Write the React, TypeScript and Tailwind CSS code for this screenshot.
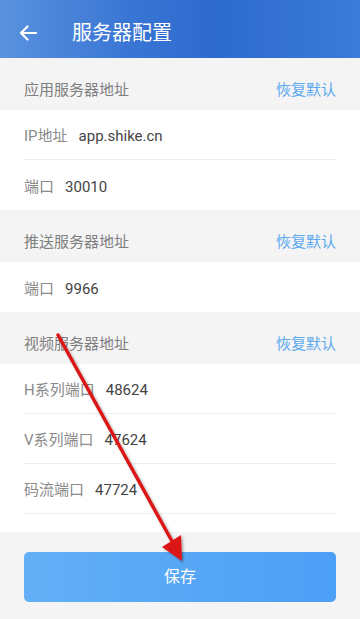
import React from "react";

interface Field {
  label: string;
  value: string;
}

interface Section {
  title: string;
  fields: Field[];
}

const sections: Section[] = [
  {
    title: "应用服务器地址",
    fields: [
      { label: "IP地址", value: "app.shike.cn" },
      { label: "端口", value: "30010" },
    ],
  },
  {
    title: "推送服务器地址",
    fields: [{ label: "端口", value: "9966" }],
  },
  {
    title: "视频服务器地址",
    fields: [
      { label: "H系列端口", value: "48624" },
      { label: "V系列端口", value: "47624" },
      { label: "码流端口", value: "47724" },
    ],
  },
];

function BackArrow() {
  return (
    <svg width="18" height="16" viewBox="0 0 18 16" fill="none">
      <path d="M17 8H2M8.5 1.5L2 8l6.5 6.5" stroke="white" strokeWidth="2.2" strokeLinecap="round" strokeLinejoin="round" />
    </svg>
  );
}

function RedArrow() {
  return (
    <svg className="pointer-events-none absolute left-0 top-0" width="360" height="619" viewBox="0 0 360 619">
      <defs>
        <filter id="sh" x="-20%" y="-20%" width="140%" height="140%">
          <feDropShadow dx="1.5" dy="1.5" stdDeviation="1.2" floodColor="#000" floodOpacity="0.35" />
        </filter>
      </defs>
      <g filter="url(#sh)">
        <line x1="58" y1="335" x2="173" y2="543" stroke="#dc1414" strokeWidth="3.4" strokeLinecap="round" />
        <polygon points="182,561 162,547 181,535" fill="#dc1414" />
      </g>
    </svg>
  );
}

export default function App() {
  return (
    <div
      className="relative h-[619px] w-[360px] overflow-hidden bg-[#f4f4f4]"
      style={{ fontFamily: "Roboto, 'Noto Sans CJK SC', sans-serif" }}
    >
      <div className="flex h-[58px] items-center bg-[linear-gradient(90deg,#5a92df_0%,#3a76d4_35%,#2d6acf_60%,#3c7bd7_100%)] px-[19px] pt-[7px] shadow-[0_1px_0_#8ab4ee]">
        <BackArrow />
        <h1 className="ml-[35px] text-[20px] text-white">服务器配置</h1>
      </div>

      {sections.map((s) => (
        <div key={s.title}>
          <div className="flex h-[52px] items-center justify-between bg-[#f4f4f4] px-[24px] pt-[13px]">
            <span className="text-[15px] text-[#7f7f7f]">{s.title}</span>
            <span className="text-[15px] text-[#5aa9ef]">恢复默认</span>
          </div>
          <div className="bg-white px-[24px]">
            {s.fields.map((f, i) => (
              <div
                key={f.label}
                className={
                  "flex h-[50px] items-center gap-[11px] pt-[4px] " +
                  (i < s.fields.length - 1 || s.title === "视频服务器地址" ? "border-b border-[#eeeeee]" : "")
                }
              >
                <span className="text-[15px] text-[#8a8a8a]">{f.label}</span>
                <span className="text-[15px] text-[#444]">{f.value}</span>
              </div>
            ))}
            {s.title === "视频服务器地址" && <div className="h-[18px]" />}
          </div>
        </div>
      ))}

      <div className="px-[24px] pt-[20px]">
        <button className="flex h-[50px] w-full items-center justify-center rounded-[5px] bg-[linear-gradient(90deg,#64aff6,#4b9ff6)] text-[16px] text-white">
          保存
        </button>
      </div>

      <RedArrow />
    </div>
  );
}
